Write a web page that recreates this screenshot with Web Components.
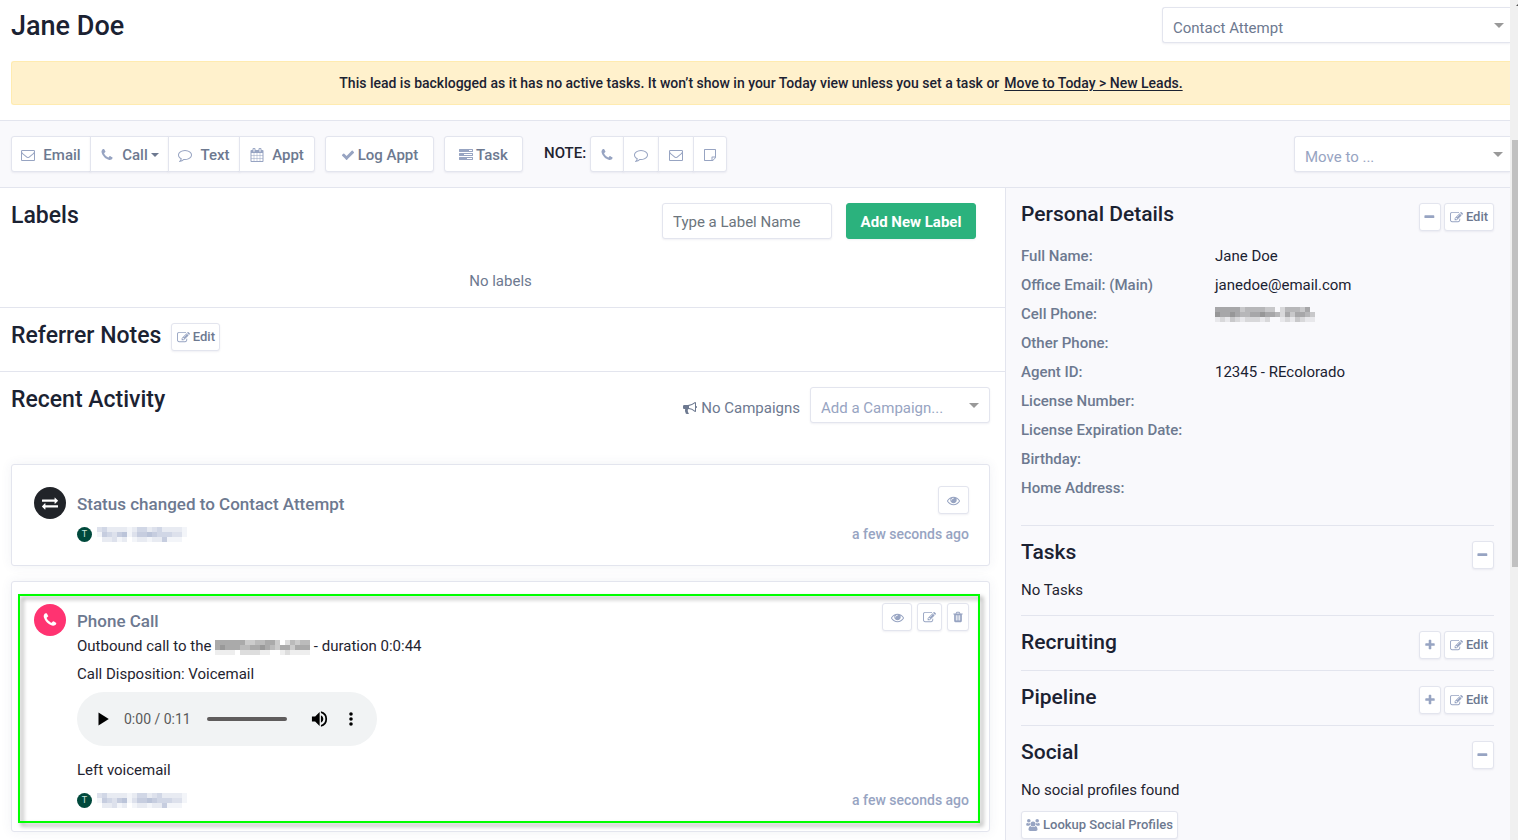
<!DOCTYPE html>
<html lang="en">
<head>
<meta charset="utf-8">
<title>Jane Doe</title>
<style>
html, body { margin: 0; height: 100%; overflow: hidden; background: #fff; }
body {
  font-family: Roboto, sans-serif; font-size: 15px; line-height: 20px; color: #1f2430;
  --heading: #1b2232; --muted: #6d7990; --icon: #97a4c2; --line: #e3e5ee; --panel: #f9f9fc;
}
</style>
</head>
<body>
<lead-page></lead-page>
<script>
const ICONS = {
  envelope: 'M1664 1504v-768q-32 36-69 66-268 206-426 338-51 43-83 67t-86.5 48.5-102.5 24.5h-2q-48 0-102.5-24.5t-86.5-48.5-83-67q-158-132-426-338-37-30-69-66v768q0 13 9.5 22.5t22.5 9.5h1472q13 0 22.5-9.5t9.5-22.5zm0-1051v-24.5l-.5-13-3-12.5-5.5-9-9-7.5-14-2.5h-1472q-13 0-22.5 9.5t-9.5 22.5q0 168 147 284 193 152 401 317 6 5 35 29.5t46 37.5 44.5 31.5 50.5 27.5 43 9h2q20 0 43-9t50.5-27.5 44.5-31.5 46-37.5 35-29.5q208-165 401-317 54-43 100.5-115.5t46.5-131.5zm128-37v1088q0 66-47 113t-113 47h-1472q-66 0-113-47t-47-113v-1088q0-66 47-113t113-47h1472q66 0 113 47t47 113z',
  phone: 'M1600 1240q0 27-10 70.5t-21 68.5q-21 50-122 106-94 51-186 51-27 0-53-3.5t-57.5-12.5-47-14.5-55.5-20.5-49-18q-98-35-175-83-127-79-264-216t-216-264q-48-77-83-175-3-9-18-49t-20.5-55.5-14.5-47-12.5-57.5-3.5-53q0-92 51-186 56-101 106-122 25-11 68.5-21t70.5-10q14 0 21 3 18 6 53 76 11 19 30 54t35 63.5 31 53.5q3 4 17.5 25t21.5 35.5 7 28.5q0 20-28.5 50t-62 55-62 53-28.5 46q0 9 5 22.5t8.5 20.5 14 24 11.5 19q76 137 174 235t235 174q2 1 19 11.5t24 14 20.5 8.5 22.5 5q18 0 46-28.5t53-62 55-62 50-28.5q14 0 28.5 7t35.5 21.5 25 17.5q25 15 53.5 31t63.5 35 54 30q70 35 76 53 3 7 3 21z',
  comment: 'M896 384q-204 0-381.5 69.5t-282 187.5-104.5 255q0 112 71.5 213.5t201.5 175.5l87 50-27 96q-24 91-70 172 152-63 275-171l43-38 57 6q69 8 130 8 204 0 381.5-69.5t282-187.5 104.5-255-104.5-255-282-187.5-381.5-69.5zm896 512q0 174-120 321.5t-326 233-450 85.5q-70 0-145-8-198 175-460 242-49 14-114 22h-5q-15 0-27-10.5t-16-27.5v-1q-3-4-.5-12t2-10 4.5-9.5l6-9 7-8.5 8-9q7-8 31-34.5t34.5-38 31-39.5 32.5-51 27-59 26-76q-157-89-247.5-220t-90.5-281q0-130 71-248.5t191-204.5 286-136.5 348-50.5 348 50.5 286 136.5 191 204.5 71 248.5z',
  calendar: 'M192 1664h288v-288h-288v288zm352 0h320v-288h-320v288zm-352-352h288v-320h-288v320zm352 0h320v-320h-320v320zm-352-384h288v-288h-288v288zm736 736h320v-288h-320v288zm-384-736h320v-288h-320v288zm768 736h288v-288h-288v288zm-384-352h320v-320h-320v320zm-352-864v-288q0-13-9.5-22.5t-22.5-9.5h-64q-13 0-22.5 9.5t-9.5 22.5v288q0 13 9.5 22.5t22.5 9.5h64q13 0 22.5-9.5t9.5-22.5zm736 864h288v-320h-288v320zm-384-384h320v-288h-320v288zm384 0h288v-288h-288v288zm32-480v-288q0-13-9.5-22.5t-22.5-9.5h-64q-13 0-22.5 9.5t-9.5 22.5v288q0 13 9.5 22.5t22.5 9.5h64q13 0 22.5-9.5t9.5-22.5zm384-64v1280q0 52-38 90t-90 38h-1408q-52 0-90-38t-38-90v-1280q0-52 38-90t90-38h128v-96q0-66 47-113t113-47h64q66 0 113 47t47 113v96h384v-96q0-66 47-113t113-47h64q66 0 113 47t47 113v96h128q52 0 90 38t38 90z',
  check: 'M1671 566q0 40-28 68l-724 724-136 136q-28 28-68 28t-68-28l-136-136-362-362q-28-28-28-68t28-68l136-136q28-28 68-28t68 28l294 295 656-657q28-28 68-28t68 28l136 136q28 28 28 68z',
  tasks: 'M1024 1408h640v-128h-640v128zm-384-512h1024v-128h-1024v128zm640-512h384v-128h-384v128zm512 832v256q0 26-19 45t-45 19h-1664q-26 0-45-19t-19-45v-256q0-26 19-45t45-19h1664q26 0 45 19t19 45zm0-512v256q0 26-19 45t-45 19h-1664q-26 0-45-19t-19-45v-256q0-26 19-45t45-19h1664q26 0 45 19t19 45zm0-512v256q0 26-19 45t-45 19h-1664q-26 0-45-19t-19-45v-256q0-26 19-45t45-19h1664q26 0 45 19t19 45z',
  note: 'M224 128h1344q96 0 96 96v960q0 60-42 102l-336 336q-42 42-102 42h-960q-96 0-96-96v-1344q0-96 96-96zm32 128v1280h832v-352q0-96 96-96h352v-832zm960 960v316q14-5 20-12l284-284q7-7 12-20z',
  edit: 'M888 1184l116-116-152-152-116 116v56h96v96h56zm440-720q-16-16-33 1l-350 350q-17 17-1 33t33-1l350-350q17-17 1-33zm80 594v190q0 119-84.5 203.5t-203.5 84.5h-832q-119 0-203.5-84.5t-84.5-203.5v-832q0-119 84.5-203.5t203.5-84.5h832q63 0 117 25 15 7 18 23 3 17-9 29l-49 49q-14 14-32 8-23-6-45-6h-832q-66 0-113 47t-47 113v832q0 66 47 113t113 47h832q66 0 113-47t47-113v-126q0-13 9-22l64-64q15-15 35-7t20 29zm-96-738l288 288-672 672h-288v-288zm444 132l-92 92-288-288 92-92q28-28 68-28t68 28l152 152q28 28 28 68t-28 68z',
  eye: 'M1664 960q-152-236-381-353 61 104 61 225 0 185-131.5 316.5t-316.5 131.5-316.5-131.5-131.5-316.5q0-121 61-225-229 117-381 353 133 205 333.5 326.5t434.5 121.5 434.5-121.5 333.5-326.5zm-720-384q0-20-14-34t-34-14q-125 0-214.5 89.5t-89.5 214.5q0 20 14 34t34 14 34-14 14-34q0-86 61-147t147-61q20 0 34-14t14-34zm848 384q0 34-20 69-140 230-376.5 368.5t-499.5 138.5-499.5-139-376.5-368q-20-35-20-69t20-69q140-229 376.5-368t499.5-139 499.5 139 376.5 368q20 35 20 69z',
  trash: 'M704 1376v-704q0-14-9-23t-23-9h-64q-14 0-23 9t-9 23v704q0 14 9 23t23 9h64q14 0 23-9t9-23zm256 0v-704q0-14-9-23t-23-9h-64q-14 0-23 9t-9 23v704q0 14 9 23t23 9h64q14 0 23-9t9-23zm256 0v-704q0-14-9-23t-23-9h-64q-14 0-23 9t-9 23v704q0 14 9 23t23 9h64q14 0 23-9t9-23zm-544-992h448l-48-117q-7-9-17-11h-317q-10 2-17 11zm928 32v64q0 14-9 23t-23 9h-96v948q0 83-47 143.5t-113 60.5h-832q-66 0-113-58.5t-47-141.5v-952h-96q-14 0-23-9t-9-23v-64q0-14 9-23t23-9h309l70-167q15-37 54-63t79-26h320q40 0 79 26t54 63l70 167h309q14 0 23 9t9 23z',
  exchange: 'M1792 1184v192q0 13-9.5 22.5t-22.5 9.5h-1376v192q0 13-9.5 22.5t-22.5 9.5q-12 0-24-10l-319-320q-9-9-9-22 0-14 9-23l320-320q9-9 23-9 13 0 22.5 9.5t9.5 22.5v192h1376q13 0 22.5 9.5t9.5 22.5zm0-544q0 14-9 23l-320 320q-9 9-23 9-13 0-22.5-9.5t-9.5-22.5v-192h-1376q-13 0-22.5-9.5t-9.5-22.5v-192q0-13 9.5-22.5t22.5-9.5h1376v-192q0-14 9-23t23-9q12 0 24 10l319 319q9 9 9 23z',
  bullhorn: 'M1664 640q53 0 90.5 37.5t37.5 90.5-37.5 90.5-90.5 37.5v384q0 52-38 90t-90 38q-417-347-812-380-58 19-91 66t-31 100.5 40 92.5q-20 33-23 65.5t6 58 33.5 55 48 50 61.5 50.5q-29 58-111.5 83t-168.5 11.5-132-55.5q-7-23-29.5-87.5t-32-94.5-23-89-15-101 3.5-98.5 22-110.5h-122q-66 0-113-47t-47-113v-192q0-66 47-113t113-47h480q435 0 896-384 52 0 90 38t38 90v384zm-128 604v-954q-394 302-768 343v270q377 42 768 341z',
  minus: 'M160 640h1280q96 0 96 96v224q0 96-96 96h-1280q-96 0-96-96v-224q0-96 96-96z',
  plus: 'M1600 736v192q0 40-28 68t-68 28h-416v416q0 40-28 68t-68 28h-192q-40 0-68-28t-28-68v-416h-416q-40 0-68-28t-28-68v-192q0-40 28-68t68-28h416v-416q0-40 28-68t68-28h192q40 0 68 28t28 68v416h416q40 0 68 28t28 68z',
  users: 'M896 448a320 320 0 1 1 0 640a320 320 0 1 1 0-640zM360 128a230 230 0 1 1 0 460a230 230 0 1 1 0-460zM1432 128a230 230 0 1 1 0 460a230 230 0 1 1 0-460zM150 600q110 90 210 90t180-50q-50 120-10 260-90 10-150 100h-220q-140 0-140-130 0-240 130-270zM1642 600q-110 90-210 90t-180-50q50 120 10 260 90 10 150 100h220q140 0 140-130 0-240-130-270zM560 1010q150 150 336 150t336-150q220 30 250 420 0 234-220 234h-732q-220 0-220-234 30-390 250-420z',
  play: 'M448 256v1280l1024-640z',
  volume: 'M192 640v512h320l448 448v-1408l-448 448zM1088 520v752q240-110 240-376t-240-376zM1088 128v176q440 140 440 592t-440 592v176q616-150 616-768t-616-768z',
  dots: 'M896 128a200 200 0 1 1 0 400a200 200 0 1 1 0-400zM896 696a200 200 0 1 1 0 400a200 200 0 1 1 0-400zM896 1264a200 200 0 1 1 0 400a200 200 0 1 1 0-400z'
};

/* Defines a custom element whose shadow root is built from a render function. */
function element(name, render) {
  customElements.define(name, class extends HTMLElement {
    connectedCallback() {
      if (this.shadowRoot) return;
      const t = document.createElement('template');
      t.innerHTML = render(this);
      this.attachShadow({ mode: 'open' }).append(t.content.cloneNode(true));
    }
  });
}
const attr = (el, n, d = '') => el.getAttribute(n) ?? d;

element('ui-icon', el => `
<style>:host{display:inline-flex;flex:none}svg{display:block;fill:currentColor}</style>
<svg width="${attr(el, 'size', '14')}" height="${attr(el, 'size', '14')}" viewBox="0 0 1792 1792" aria-hidden="true"><path fill-rule="${attr(el, 'name') === 'note' ? 'evenodd' : 'nonzero'}" d="${ICONS[attr(el, 'name')]}"/></svg>`);

element('ui-button', el => `
<style>
:host{display:block;flex:none}
button{box-sizing:border-box;display:flex;align-items:center;justify-content:center;gap:var(--gap,3px);width:100%;min-width:var(--w,0);height:28px;margin:0;padding:0 4px;
 border:1px solid var(--line);border-radius:3px;background:#fff;box-shadow:0 1px 2px rgba(60,70,110,.08);font:500 13px/20px Roboto,sans-serif;color:var(--muted);white-space:nowrap}
ui-icon{color:var(--icon)}
:host([large]) button{height:36px;font-size:15px;padding-top:2px}
:host([primary]) button{background:#2bb27d;border-color:#2bb27d;color:#fff;font-weight:700}
:host([seg]) button{border-radius:0;margin-left:-1px;width:calc(100% + 1px)}
:host([seg=first]) button{border-radius:3px 0 0 3px;margin-left:0;width:100%}
:host([seg=last]) button{border-radius:0 3px 3px 0}
.caret{border:4px solid transparent;border-top-color:var(--muted);border-bottom:0}
.text{display:flex;align-items:center;gap:3px}
</style>
<button type="button" aria-label="${attr(el, 'label', el.textContent)}">${el.hasAttribute('icon') ? `<ui-icon name="${attr(el, 'icon')}" size="${attr(el, 'size', '12')}"></ui-icon>` : ''}${el.textContent ? '<span class="text"><slot></slot>' + (el.hasAttribute('caret') ? '<i class="caret"></i>' : '') + '</span>' : ''}</button>`);

element('ui-select', el => `
<style>
:host{display:grid;position:relative;flex:none}
select{box-sizing:border-box;appearance:none;width:100%;height:36px;margin:0;padding:6px 24px 0 10px;border:1px solid var(--line);border-radius:3px;background:#fff;
 box-shadow:0 1px 2px rgba(60,70,110,.08);font:400 15px/20px Roboto,sans-serif;color:var(--c,var(--icon))}
:host([flush]) select{border-right:0;border-radius:3px 0 0 3px}
i{position:absolute;right:var(--arrow,11px);top:16px;border:5px solid transparent;border-top-color:#999;border-bottom:0;pointer-events:none}
</style>
<select aria-label="${attr(el, 'label')}"><option>${attr(el, 'value')}</option></select><i></i>`);

/* Mosaic standing in for private text: each digit is one cell's opacity. */
element('private-text', el => {
  const rows = attr(el, 'cells').split(' ');
  const w = rows[0].length * 5;
  return `<style>:host{display:inline-flex;vertical-align:middle}</style>
<svg width="${w}" height="15" role="img" aria-label="Hidden" fill="${attr(el, 'tone', '#555')}" shape-rendering="crispEdges">${rows.map((r, y) => [...r].map((v, x) => `<rect x="${x * 5}" y="${y * 5}" width="5" height="5" opacity="${v / 10}"/>`).join('')).join('')}</svg>`;
});

element('lead-header', () => `
<style>
:host{display:block;padding:7px 0 15px 11px}
.top{display:flex;justify-content:space-between;align-items:flex-start}
h1{margin:0;font:500 27px/38px Roboto,sans-serif;color:var(--heading)}
.status{width:348px;--c:var(--muted);--arrow:6px}
p{margin:16px 0 0;height:42px;border:1px solid #ffebb0;border-right:0;border-radius:3px 0 0 3px;background:#fff1cc;display:flex;align-items:center;justify-content:center;gap:5px;font:500 14px/20px Roboto,sans-serif;color:#1b2232}
a{color:inherit;text-underline-offset:2px}
</style>
<div class="top"><h1>Jane Doe</h1><ui-select class="status" flush label="Status" value="Contact Attempt"></ui-select></div>
<p><span>This lead is backlogged as it has no active tasks. It won’t show in your Today view unless you set a task or</span><a href="#">Move to Today &gt; New Leads.</a></p>`);

element('lead-toolbar', () => `
<style>
:host{display:flex;align-items:flex-start;padding:15px 0 15px 11px;background:var(--panel);border:solid var(--line);border-width:1px 0}
.group{display:flex}
.gap{margin-left:10px}
.wide{--gap:8px}
.note{margin:7px 4px 0 21px;font-weight:500}
.move{margin-left:auto;width:216px;--arrow:7px}
</style>
<div class="group">
<ui-button class="wide" style="--w:80px" large seg="first" icon="envelope" size="14">Email</ui-button>
<ui-button class="wide" style="--w:79px" large seg="mid" icon="phone" size="14" caret>Call</ui-button>
<ui-button class="wide" style="--w:72px" large seg="mid" icon="comment" size="14">Text</ui-button>
<ui-button class="wide" style="--w:76px" large seg="last" icon="calendar" size="14">Appt</ui-button>
</div>
<ui-button class="gap" style="--w:109px" large icon="check" size="14">Log Appt</ui-button>
<ui-button class="gap" style="--w:79px" large icon="tasks" size="14">Task</ui-button>
<span class="note">NOTE:</span>
<div class="group">
<ui-button style="--w:34px" large seg="first" icon="phone" size="14" label="Call note"></ui-button>
<ui-button style="--w:36px" large seg="mid" icon="comment" size="14" label="Text note"></ui-button>
<ui-button style="--w:36px" large seg="mid" icon="envelope" size="14" label="Email note"></ui-button>
<ui-button style="--w:34px" large seg="last" icon="note" size="14" label="Plain note"></ui-button>
</div>
<ui-select class="move" flush label="Move to" value="Move to ..."></ui-select>`);

element('main-section', el => `
<style>
:host{display:block;padding:15px 15px var(--bottom,16px) 11px;border-bottom:1px solid var(--line)}
:host([last]){border:0}
header{display:flex;align-items:flex-start;gap:10px}
h2{margin:0;font:500 23px/26px Roboto,sans-serif;color:var(--heading)}
.tools{display:flex;align-items:center;flex:1;justify-content:var(--tools,flex-start)}
</style>
<header><h2>${attr(el, 'heading')}</h2><div class="tools"><slot name="tools"></slot></div></header><slot></slot>`);

element('label-input', () => `
<style>:host{display:block}
input{box-sizing:border-box;width:170px;height:36px;padding:2px 10px 0;border:1px solid var(--line);border-radius:3px;box-shadow:0 1px 2px rgba(60,70,110,.08);font:400 15px/20px Roboto,sans-serif;display:block}
input::placeholder{color:#6c757d;opacity:1}</style>
<input type="text" aria-label="Label name" placeholder="Type a Label Name">`);

element('audio-player', () => `
<style>
:host{box-sizing:border-box;display:flex;align-items:center;width:300px;height:54px;padding:0 18px;border-radius:27px;background:#f1f3f4;color:#000}
button{margin:0;padding:0;border:0;background:none;display:flex;width:16px;justify-content:center;color:#000}
span{margin:0 16px 0 13px;font:400 14px/20px Roboto,sans-serif;color:#5a5a5a}
input{appearance:none;flex:1;min-width:0;height:4px;margin:0 24px 0 0;border-radius:2px;background:#5f5c5c}
input::-webkit-slider-thumb{appearance:none;width:0;height:0}
.more{margin-left:16px}
</style>
<button type="button" aria-label="Play"><ui-icon name="play" size="18"></ui-icon></button><span>0:00 / 0:11</span>
<input type="range" aria-label="Position" value="0" max="11">
<button type="button" aria-label="Mute"><ui-icon name="volume" size="18"></ui-icon></button>
<button type="button" class="more" aria-label="More options"><ui-icon name="dots" size="16"></ui-icon></button>`);

element('activity-card', el => `
<style>
:host{position:relative;display:grid;grid-template-columns:32px minmax(0,1fr);column-gap:11px;padding:21px 20px 21px 22px;border:1px solid var(--line);border-radius:3px;background:#fff;box-shadow:0 0 12px rgba(60,70,110,.07)}
.badge{display:flex;align-items:center;justify-content:center;width:32px;height:32px;margin-top:1px;border-radius:50%;background:var(--badge);color:#fff}
header{display:flex;justify-content:space-between;height:32px}
h3{margin:8px 0 0;font:500 17px/20px Roboto,sans-serif;color:var(--muted)}
.tools{display:flex;gap:5px}
footer{display:flex;align-items:center;justify-content:space-between;height:20px;margin-top:6px;color:var(--icon);font-size:15px}
.who{display:flex;align-items:center;gap:5px}
.avatar{width:15px;height:15px;border-radius:50%;background:#00493c;color:#c8e6dc;font:400 9px/15px Roboto,sans-serif;text-align:center}
time{font:500 14px/20px Roboto,sans-serif}
:host([highlight])::after{content:"";position:absolute;inset:12px 9px 8px 6px;border:2px solid #0f0;filter:drop-shadow(3px 3px 2px rgba(0,0,0,.4));pointer-events:none}
</style>
<div class="badge"><ui-icon name="${attr(el, 'icon')}" size="16"></ui-icon></div>
<div><header><h3>${attr(el, 'heading')}</h3><div class="tools"><slot name="tools"></slot></div></header>
<slot></slot>
<footer><div class="who"><span class="avatar">T</span><private-text tone="#8d9cc0" cells="342222124423422221 154356135565444331 022312012212251110"></private-text></div><time>a few seconds ago</time></footer></div>`);

element('side-section', el => `
<style>
:host{display:block;padding:15px 0 var(--bottom,15px);border-bottom:1px solid var(--line)}
:host([last]){border:0}
header{display:flex;align-items:flex-start;justify-content:space-between;height:28px}
h2{margin:0;font:500 21px/22px Roboto,sans-serif;color:var(--heading)}
.tools{display:flex;gap:3px}
</style>
<header><h2>${attr(el, 'heading')}</h2><div class="tools">
<ui-button style="--w:22px" icon="${attr(el, 'toggle')}" size="12" label="${attr(el, 'toggle') === 'plus' ? 'Expand' : 'Collapse'}"></ui-button>
${el.hasAttribute('editable') ? '<ui-button style="--w:50px" icon="edit" size="13">Edit</ui-button>' : ''}</div></header><slot></slot>`);

element('lead-sidebar', () => `
<style>
:host{display:block;padding:0 16px 0 15px;background:var(--panel);border-left:1px solid var(--line);min-width:0}
dl{margin:10px 0 0;display:grid;grid-template-columns:194px 1fr;grid-auto-rows:29px;align-items:center}
dt{font-weight:500;color:var(--muted)}dd{margin:0;color:#1b2232}
p{margin:11px 0 0}
.lookup{width:157px;margin-top:11px}
</style>
<side-section style="--bottom:23px" heading="Personal Details" toggle="minus" editable>
<dl><dt>Full Name:</dt><dd>Jane Doe</dd><dt>Office Email: (Main)</dt><dd>janedoe@email.com</dd>
<dt>Cell Phone:</dt><dd><private-text cells="55555344443302444350 65565445565542535543 12132122212001213211"></private-text></dd>
<dt>Other Phone:</dt><dd></dd><dt>Agent ID:</dt><dd>12345 - REcolorado</dd><dt>License Number:</dt><dd></dd>
<dt>License Expiration Date:</dt><dd></dd><dt>Birthday:</dt><dd></dd><dt>Home Address:</dt><dd></dd></dl></side-section>
<side-section heading="Tasks" toggle="minus"><p>No Tasks</p></side-section>
<side-section style="--bottom:11px" heading="Recruiting" toggle="plus" editable></side-section>
<side-section style="--bottom:11px" heading="Pipeline" toggle="plus" editable></side-section>
<side-section last heading="Social" toggle="minus"><p>No social profiles found</p><ui-button class="lookup" icon="users" size="14">Lookup Social Profiles</ui-button></side-section>`);

element('lead-main', () => `
<style>
:host{display:block;min-width:0}
.add{margin:0 14px}
p{margin:0;line-height:28px}
.empty{margin:32px 0 0;line-height:20px;text-align:center;color:var(--muted)}
.none{display:flex;align-items:center;gap:4px;margin-right:10px;padding-top:5px;color:var(--muted)}
.campaign{width:180px}
.cards{display:grid;gap:15px;margin-top:41px}
.first{line-height:20px;margin:1px 0 4px}
audio-player{margin:4px 0 10px}
</style>
<main-section heading="Labels" style="--tools:flex-end"><label-input slot="tools"></label-input>
<ui-button slot="tools" class="add" style="--w:130px" large primary>Add New Label</ui-button><p class="empty">No labels</p></main-section>
<main-section heading="Referrer Notes" style="--bottom:20px"><ui-button slot="tools" style="--w:49px" icon="edit" size="13">Edit</ui-button></main-section>
<main-section last heading="Recent Activity" style="--tools:flex-end"><span slot="tools" class="none"><ui-icon name="bullhorn" size="14"></ui-icon>No Campaigns</span><ui-select slot="tools" class="campaign" label="Campaign" value="Add a Campaign..."></ui-select>
<div class="cards">
<activity-card style="--badge:#212429" icon="exchange" heading="Status changed to Contact Attempt"><ui-button slot="tools" style="--w:31px" icon="eye" size="13" label="View"></ui-button></activity-card>
<activity-card highlight style="--badge:#ff3371" icon="phone" heading="Phone Call">
<ui-button slot="tools" style="--w:30px" icon="eye" size="13" label="View"></ui-button><ui-button slot="tools" style="--w:25px" icon="edit" size="13" label="Edit"></ui-button><ui-button slot="tools" style="--w:22px" icon="trash" size="12" label="Delete"></ui-button>
<p class="first">Outbound call to the <private-text cells="5555553344553024344 5655544556543553555 1111022221100121111"></private-text> - duration 0:0:44</p>
<p>Call Disposition: Voicemail</p><audio-player></audio-player><p>Left voicemail</p></activity-card>
</div></main-section>`);

element('page-scrollbar', () => `
<style>:host{display:block;background:#f0f0f0;padding-left:2px;overflow:hidden}
svg{display:block}div{height:427px;margin-top:132px;background:#c1c1c1}</style>
<svg width="6" height="8" aria-hidden="true"><path d="M4 6l4-4 4 4z" fill="#505050"/></svg><div></div>`);

element('lead-page', () => `
<style>
:host{display:grid;grid-template-columns:minmax(0,1fr) 8px;height:100vh;overflow:hidden}
.content{overflow:hidden}
.columns{display:grid;grid-template-columns:minmax(0,1fr) 505px;min-height:100vh}
</style>
<div class="content"><lead-header></lead-header><lead-toolbar></lead-toolbar><div class="columns"><lead-main></lead-main><lead-sidebar></lead-sidebar></div></div>
<page-scrollbar></page-scrollbar>`);
</script>
</body>
</html>
